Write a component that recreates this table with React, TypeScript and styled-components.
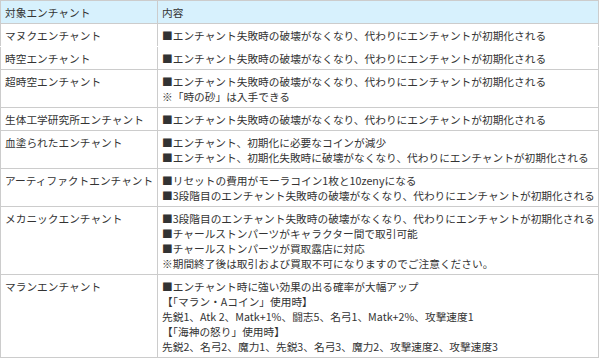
import React from "react";
import styled, { createGlobalStyle } from "styled-components";

const GlobalStyle = createGlobalStyle`
  html, body {
    margin: 0;
    padding: 0;
    background: #ffffff;
  }
  body {
    font-family: "Noto Sans CJK JP", "Noto Sans", sans-serif;
    color: #333333;
  }
`;

type Row = {
  name: string;
  lines: string[];
  joined?: boolean; // no visible line under this row
};

const rows: Row[] = [
  {
    name: "マヌクエンチャント",
    lines: ["■エンチャント失敗時の破壊がなくなり、代わりにエンチャントが初期化される"],
    joined: true,
  },
  {
    name: "時空エンチャント",
    lines: ["■エンチャント失敗時の破壊がなくなり、代わりにエンチャントが初期化される"],
  },
  {
    name: "超時空エンチャント",
    lines: [
      "■エンチャント失敗時の破壊がなくなり、代わりにエンチャントが初期化される",
      "※「時の砂」は入手できる",
    ],
  },
  {
    name: "生体工学研究所エンチャント",
    lines: ["■エンチャント失敗時の破壊がなくなり、代わりにエンチャントが初期化される"],
  },
  {
    name: "血塗られたエンチャント",
    lines: [
      "■エンチャント、初期化に必要なコインが減少",
      "■エンチャント、初期化失敗時に破壊がなくなり、代わりにエンチャントが初期化される",
    ],
  },
  {
    name: "アーティファクトエンチャント",
    lines: [
      "■リセットの費用がモーラコイン1枚と10zenyになる",
      "■3段階目のエンチャント失敗時の破壊がなくなり、代わりにエンチャントが初期化される",
    ],
  },
  {
    name: "メカニックエンチャント",
    lines: [
      "■3段階目のエンチャント失敗時の破壊がなくなり、代わりにエンチャントが初期化される",
      "■チャールストンパーツがキャラクター間で取引可能",
      "■チャールストンパーツが買取露店に対応",
      "※期間終了後は取引および買取不可になりますのでご注意ください。",
    ],
  },
  {
    name: "マランエンチャント",
    lines: [
      "■エンチャント時に強い効果の出る確率が大幅アップ",
      "【「マラン・Aコイン」使用時】",
      "先鋭1、Atk 2、Matk+1%、闘志5、名弓1、Matk+2%、攻撃速度1",
      "【「海神の怒り」使用時】",
      "先鋭2、名弓2、魔力1、先鋭3、名弓3、魔力2、攻撃速度2、攻撃速度3",
    ],
  },
];

export default function App() {
  return (
    <>
      <GlobalStyle />
      <Table>
        <colgroup>
          <col style={{ width: 157 }} />
          <col />
        </colgroup>
        <thead>
          <tr>
            <HeadCell>
              <Line>対象エンチャント</Line>
            </HeadCell>
            <HeadCell>
              <Line>内容</Line>
            </HeadCell>
          </tr>
        </thead>
        <tbody>
          {rows.map((row) => (
            <BodyRow key={row.name} $joined={row.joined}>
              <NameCell>
                <Line>{row.name}</Line>
              </NameCell>
              <InfoCell>
                {row.lines.map((line, i) => (
                  <Line key={i}>{line}</Line>
                ))}
              </InfoCell>
            </BodyRow>
          ))}
        </tbody>
      </Table>
    </>
  );
}

const Table = styled.table`
  width: 599px;
  border-collapse: collapse;
  table-layout: fixed;
  font-size: 10.7px;
  line-height: 15px;
`;

const HeadCell = styled.th`
  background: #d7f1fd;
  border: 1px solid #cccccc;
  padding: 4px 4px 3px;
  text-align: left;
  font-weight: normal;
`;

const BodyRow = styled.tr<{ $joined?: boolean }>`
  td {
    border-bottom: 1px solid ${(p) => (p.$joined ? "#ffffff" : "#cccccc")};
  }
`;

const NameCell = styled.td`
  border-left: 1px solid #cccccc;
  border-right: 1px solid #cccccc;
  padding: 4px 4px 3px;
  vertical-align: top;
`;

const InfoCell = styled.td`
  border-right: 1px solid #cccccc;
  padding: 4px 4px 3px;
  vertical-align: top;
`;

const Line = styled.div`
  height: 15px;
  white-space: nowrap;
  overflow: visible;
`;
